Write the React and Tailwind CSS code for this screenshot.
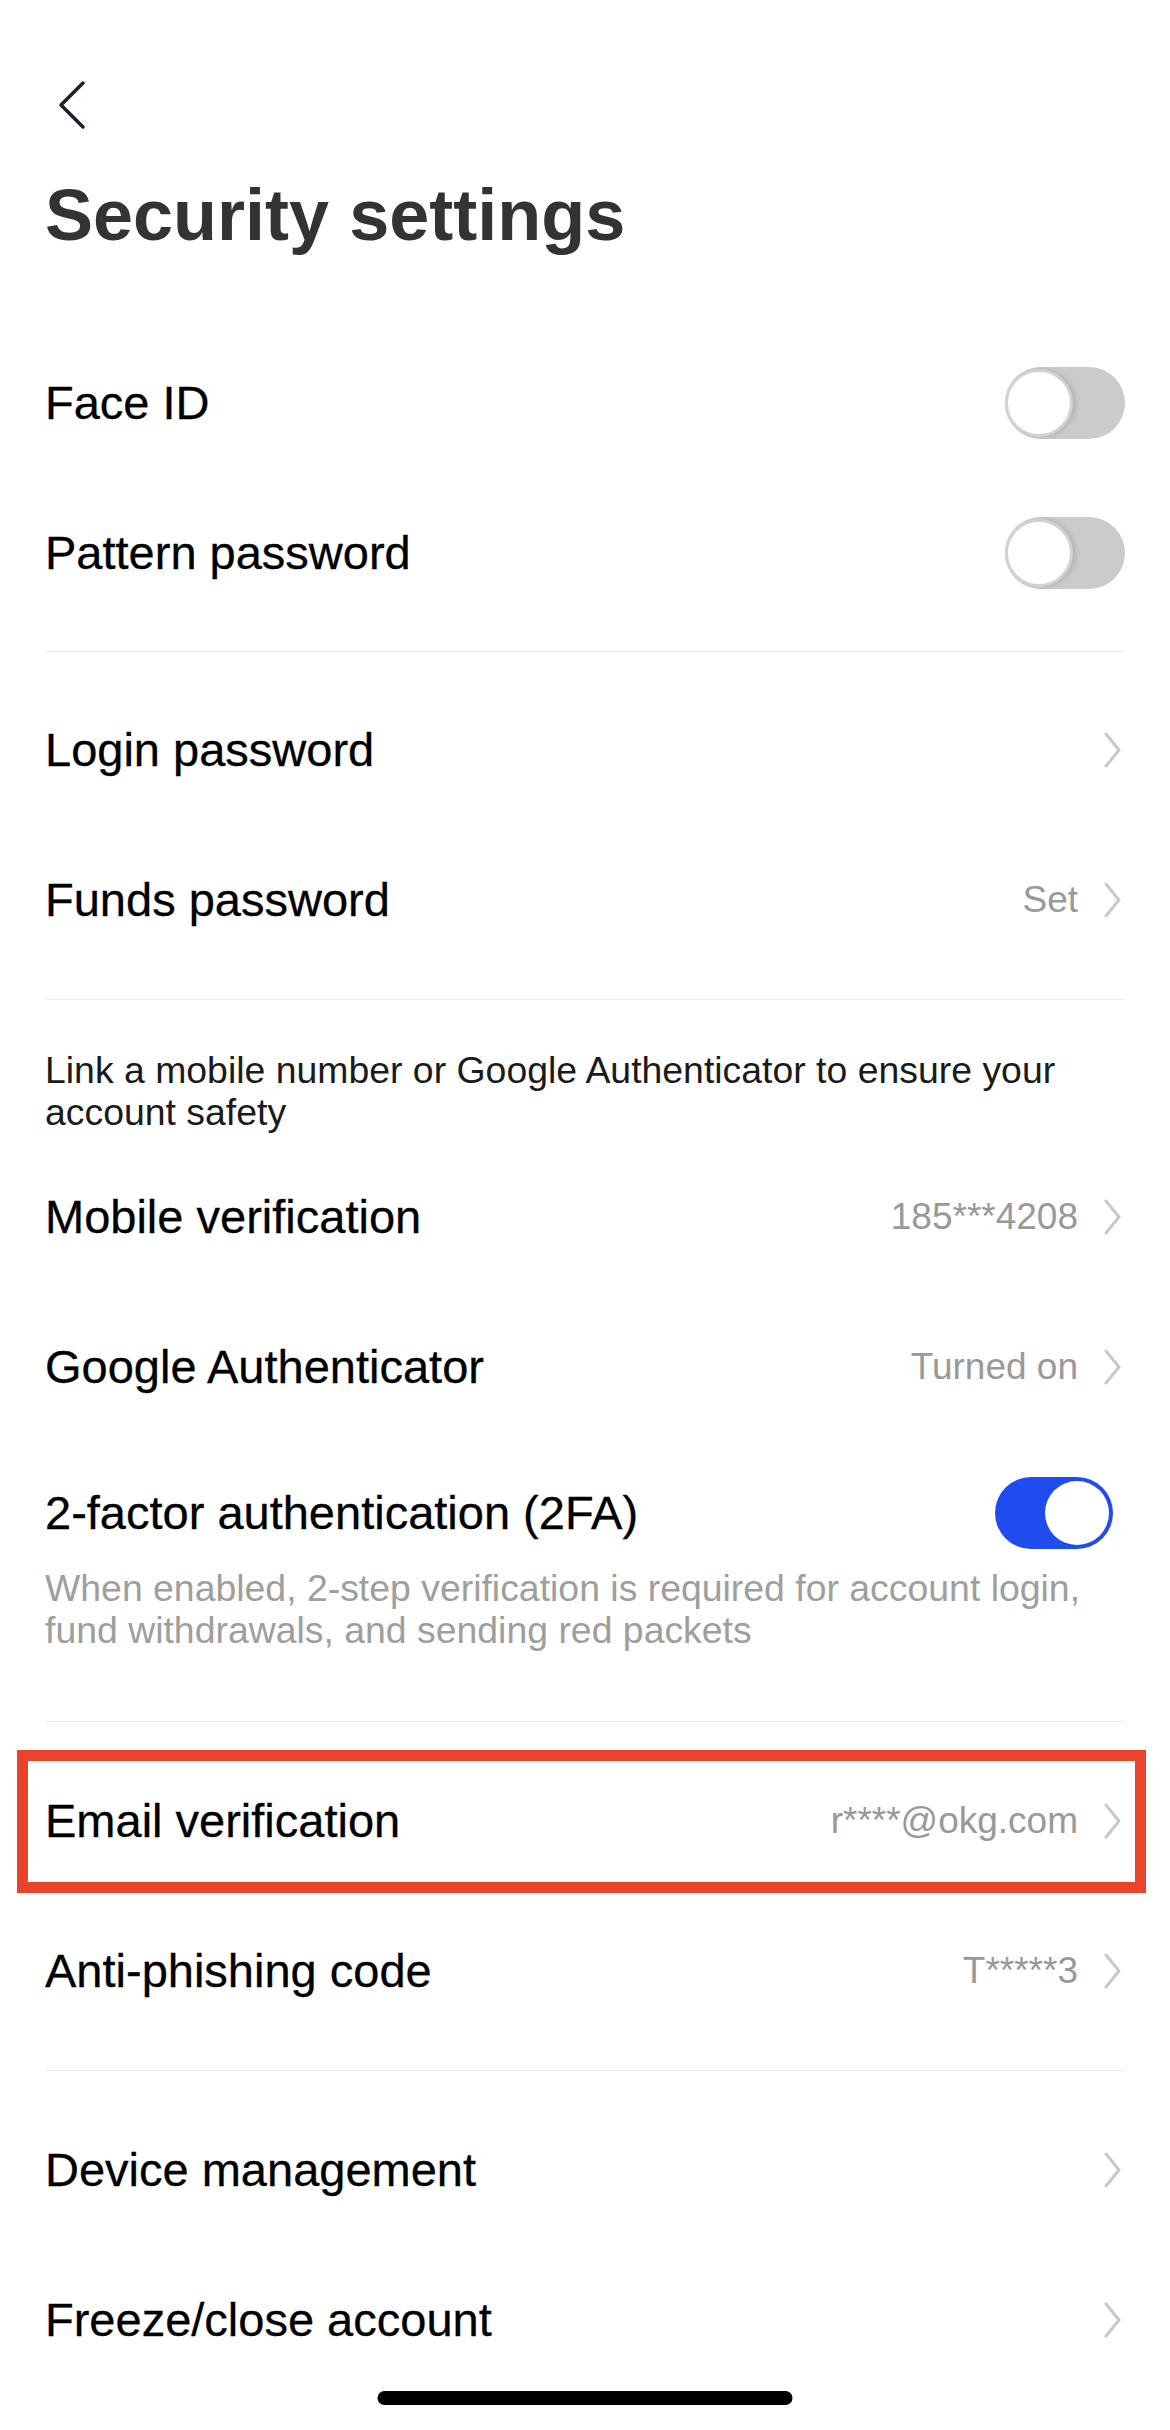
import React from "react";

function Chevron() {
  return (
    <svg width="20" height="36" viewBox="0 0 20 36" className="mr-[3px] shrink-0">
      <polyline points="4,2 17,18 4,34" fill="none" stroke="#c9c9c9" strokeWidth="3" strokeLinecap="round" strokeLinejoin="round" />
    </svg>
  );
}

function GrayToggle() {
  return (
    <div className="relative w-[120px] h-[72px] rounded-full bg-[#cbcbcb] shrink-0">
      <div className="absolute left-0 top-[2px] w-[68px] h-[68px] rounded-full bg-white border-[3px] border-[#d2d2d2] shadow-[3px_0_5px_rgba(0,0,0,0.12)]" />
    </div>
  );
}

function BlueToggle() {
  return (
    <div className="relative w-[118px] h-[72px] rounded-full bg-[#1f4cee] shrink-0 mr-[12px]">
      <div className="absolute right-[4px] top-[4px] w-[64px] h-[64px] rounded-full bg-white" />
    </div>
  );
}

function Row({ label, value, toggle, children }) {
  return (
    <div className="relative h-[150px] flex items-center justify-between">
      <span className="text-[47px] leading-[56px] text-black [-webkit-text-stroke:0.3px_#000]">{label}</span>
      {toggle ? (
        <GrayToggle />
      ) : (
        <div className="flex items-center gap-[24px]">
          {value && <span className="text-[37px] leading-[44px] text-[#999]">{value}</span>}
          <Chevron />
        </div>
      )}
      {children}
    </div>
  );
}

export default function App() {
  return (
    <div className="relative w-[1170px] h-[2430px] bg-white overflow-hidden font-['Liberation_Sans',Arial,sans-serif]">
      <div className="px-[45px]">
        <div className="pt-[80px]">
          <svg width="30" height="50" viewBox="0 0 30 50" className="ml-[13px]">
            <polyline points="25,3 3,25 25,47" fill="none" stroke="#1c1f2e" strokeWidth="3.5" strokeLinecap="round" strokeLinejoin="round" />
          </svg>
        </div>
        <h1 className="mt-[42px] text-[72px] leading-[86px] font-bold text-[#333]">Security settings</h1>

        <div className="mt-[70px]">
          <Row label="Face ID" toggle />
          <Row label="Pattern password" toggle />
        </div>
        <div className="mt-[23px] mb-[23px] h-px bg-[#ececec]" />

        <Row label="Login password" />
        <Row label="Funds password" value="Set" />
        <div className="mt-[24px] mb-[49px] h-px bg-[#ececec]" />

        <p className="text-[37.4px] leading-[42px] text-[#1a1a1a] w-[1040px]">
          Link a mobile number or Google Authenticator to ensure your account safety
        </p>
        <div className="mt-[9px]">
          <Row label="Mobile verification" value="185***4208" />
          <Row label="Google Authenticator" value="Turned on" />
        </div>

        <div className="pt-[43px]">
          <div className="flex items-center justify-between h-[56px]">
            <span className="text-[47px] leading-[56px] text-black [-webkit-text-stroke:0.3px_#000]">2-factor authentication (2FA)</span>
            <BlueToggle />
          </div>
          <p className="mt-[26px] text-[37.4px] leading-[42px] text-[#9e9e9e]">
            When enabled, 2-step verification is required for account login, fund withdrawals, and sending red packets
          </p>
        </div>
        <div className="mt-[70px] mb-[24px] h-px bg-[#ececec]" />

        <Row label="Email verification" value="r****@okg.com">
          <div className="absolute -left-[28px] -right-[21px] top-[4px] bottom-[3px] border-[11px] border-[#e8432b] pointer-events-none" />
        </Row>
        <Row label="Anti-phishing code" value="T*****3" />
        <div className="mt-[24px] mb-[24px] h-px bg-[#ececec]" />

        <Row label="Device management" />
        <Row label="Freeze/close account" />
      </div>

      <div className="absolute bottom-[25px] left-1/2 -translate-x-1/2 w-[415px] h-[14px] rounded-full bg-black" />
    </div>
  );
}
